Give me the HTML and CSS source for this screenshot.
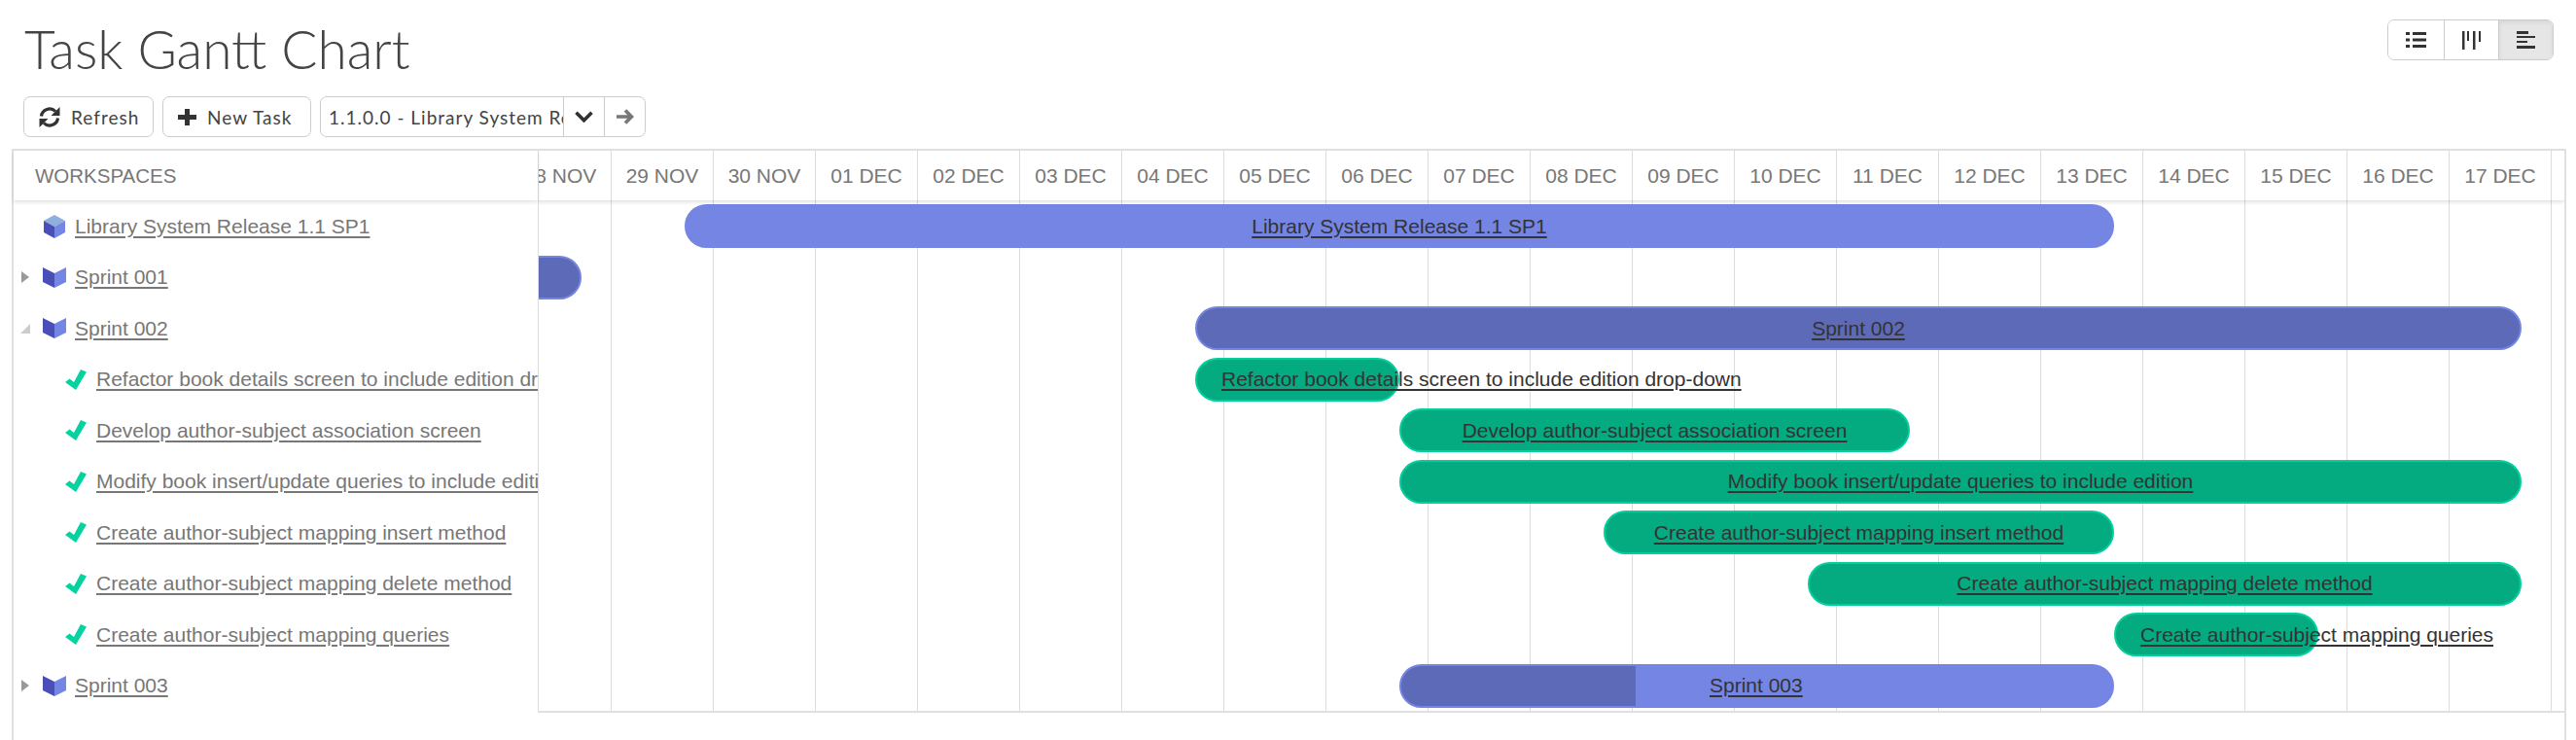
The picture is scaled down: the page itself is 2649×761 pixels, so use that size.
FILE: index.html
```html
<!DOCTYPE html>
<html lang="en">
<head>
<meta charset="utf-8">
<title>Task Gantt Chart</title>
<link rel="stylesheet" href="styles.css">
</head>
<body>
<header class="page-head">
  <h1 class="title">Task Gantt Chart</h1>
  <div class="views">
    <button class="view">
      <svg width="21" height="16" viewBox="0 0 21 16"><path fill="#333" d="M0 0h4v3H0zM7 0h14v3H7zM0 6.500h4v3H0zM7 6.500h14v3H7zM0 13h4v3H0zM7 13h14v3H7z"/></svg>
    </button>
    <button class="view">
      <svg width="19" height="19" viewBox="0 0 19 19"><path fill="#333" d="M0 0h2.500v19H0zM5 0h2v10H5zM11 0h2.500v19H11zM17 0h2v11h-2z"/></svg>
    </button>
    <button class="view view-on">
      <svg width="19" height="18" viewBox="0 0 19 18"><path fill="#333" d="M0 0h12v3H0zM0 5h19v2H0zM0 10h11v2H0zM0 15h19v3H0z"/></svg>
    </button>
  </div>
</header>

<div class="toolbar">
  <button class="btn btn-refresh">
    <svg width="22" height="21" viewBox="0 0 22 21"><g fill="none" stroke="#333" stroke-width="3.200"><path d="M2.500 9.500A8.500 8.500 0 0 1 17 4.500"/><path d="M19.500 11.500A8.500 8.500 0 0 1 5 16.500"/></g><path fill="#333" d="M21.500 0v9h-9zM.500 21v-9h9z"/></svg>
    <span>Refresh</span>
  </button>
  <button class="btn btn-new">
    <svg width="19" height="17" viewBox="0 0 19 17"><path fill="#333" d="M7 0h5v6h7v5h-7v6H7v-6H0V6h7z"/></svg>
    <span>New Task</span>
  </button>
  <div class="picker">
    <div class="picker-value">1.1.0.0 - Library System Release 1.1 SP1</div>
    <div class="picker-btn picker-caret">
      <svg width="19" height="12" viewBox="0 0 19 12"><path fill="none" stroke="#333" stroke-width="3.600" d="M1.500 1.800l8 8 8-8"/></svg>
    </div>
    <div class="picker-btn picker-go">
      <svg width="18" height="16" viewBox="0 0 18 16"><path fill="none" stroke="#777" stroke-width="3.600" d="M0 8h15M9 1.500L15.500 8 9 14.500"/></svg>
    </div>
  </div>
</div>

<main class="panel">
  <section class="tree">
    <div class="tree-head">WORKSPACES</div>
    <div class="tree-rows">
      <div class="row row-release">
        <svg class="ico-cube" width="22" height="24" viewBox="0 0 22 24"><path fill="#8fb0dc" d="M11 0l11 6-11 6L0 6z"/><path fill="#4a4fb8" d="M0 6l11 6v12L0 18z"/><path fill="#7585e3" d="M22 6l-11 6v12l11-6z"/></svg>
        <a class="link">Library System Release 1.1 SP1</a>
      </div>
      <div class="row row-sprint">
        <span class="arrow arrow-closed"></span>
        <svg class="ico-book" width="24" height="21" viewBox="0 0 24 21"><path fill="#4a4fb8" d="M0 0l12 6v15L0 15z"/><path fill="#7585e3" d="M24 0L12 6v15l12-6z"/></svg>
        <a class="link">Sprint 001</a>
      </div>
      <div class="row row-sprint">
        <span class="arrow arrow-open"></span>
        <svg class="ico-book" width="24" height="21" viewBox="0 0 24 21"><path fill="#4a4fb8" d="M0 0l12 6v15L0 15z"/><path fill="#7585e3" d="M24 0L12 6v15l12-6z"/></svg>
        <a class="link">Sprint 002</a>
      </div>
      <div class="row row-task">
        <svg class="ico-check" width="22" height="21" viewBox="0 0 22 21"><path fill="#04d3a0" d="M0 13l4.500-3.500L9 13 16 0l6 2.500L11 21z"/></svg>
        <a class="link">Refactor book details screen to include edition drop-down</a>
      </div>
      <div class="row row-task">
        <svg class="ico-check" width="22" height="21" viewBox="0 0 22 21"><path fill="#04d3a0" d="M0 13l4.500-3.500L9 13 16 0l6 2.500L11 21z"/></svg>
        <a class="link">Develop author-subject association screen</a>
      </div>
      <div class="row row-task">
        <svg class="ico-check" width="22" height="21" viewBox="0 0 22 21"><path fill="#04d3a0" d="M0 13l4.500-3.500L9 13 16 0l6 2.500L11 21z"/></svg>
        <a class="link">Modify book insert/update queries to include edition</a>
      </div>
      <div class="row row-task">
        <svg class="ico-check" width="22" height="21" viewBox="0 0 22 21"><path fill="#04d3a0" d="M0 13l4.500-3.500L9 13 16 0l6 2.500L11 21z"/></svg>
        <a class="link">Create author-subject mapping insert method</a>
      </div>
      <div class="row row-task">
        <svg class="ico-check" width="22" height="21" viewBox="0 0 22 21"><path fill="#04d3a0" d="M0 13l4.500-3.500L9 13 16 0l6 2.500L11 21z"/></svg>
        <a class="link">Create author-subject mapping delete method</a>
      </div>
      <div class="row row-task">
        <svg class="ico-check" width="22" height="21" viewBox="0 0 22 21"><path fill="#04d3a0" d="M0 13l4.500-3.500L9 13 16 0l6 2.500L11 21z"/></svg>
        <a class="link">Create author-subject mapping queries</a>
      </div>
      <div class="row row-sprint">
        <span class="arrow arrow-closed"></span>
        <svg class="ico-book" width="24" height="21" viewBox="0 0 24 21"><path fill="#4a4fb8" d="M0 0l12 6v15L0 15z"/><path fill="#7585e3" d="M24 0L12 6v15l12-6z"/></svg>
        <a class="link">Sprint 003</a>
      </div>
    </div>
  </section>

  <section class="chart">
    <div class="dates">
      <div class="date">28 NOV</div><div class="date">29 NOV</div><div class="date">30 NOV</div>
      <div class="date">01 DEC</div><div class="date">02 DEC</div><div class="date">03 DEC</div>
      <div class="date">04 DEC</div><div class="date">05 DEC</div><div class="date">06 DEC</div>
      <div class="date">07 DEC</div><div class="date">08 DEC</div><div class="date">09 DEC</div>
      <div class="date">10 DEC</div><div class="date">11 DEC</div><div class="date">12 DEC</div>
      <div class="date">13 DEC</div><div class="date">14 DEC</div><div class="date">15 DEC</div>
      <div class="date">16 DEC</div><div class="date">17 DEC</div>
    </div>
    <div class="tracks">
      <div class="track"><div class="bar bar-release" style="margin-left:180px;width:1470px"><a class="bar-label">Library System Release 1.1 SP1</a></div></div>
      <div class="track"><div class="bar bar-sprint" style="margin-left:-166px;width:240px"></div></div>
      <div class="track"><div class="bar bar-sprint" style="margin-left:705px;width:1364px"><a class="bar-label">Sprint 002</a></div></div>
      <div class="track"><div class="bar bar-task" style="margin-left:705px;width:210px"><a class="bar-label">Refactor book details screen to include edition drop-down</a></div></div>
      <div class="track"><div class="bar bar-task" style="margin-left:915px;width:525px"><a class="bar-label">Develop author-subject association screen</a></div></div>
      <div class="track"><div class="bar bar-task" style="margin-left:915px;width:1154px"><a class="bar-label">Modify book insert/update queries to include edition</a></div></div>
      <div class="track"><div class="bar bar-task" style="margin-left:1125px;width:525px"><a class="bar-label">Create author-subject mapping insert method</a></div></div>
      <div class="track"><div class="bar bar-task" style="margin-left:1335px;width:734px"><a class="bar-label">Create author-subject mapping delete method</a></div></div>
      <div class="track"><div class="bar bar-task" style="margin-left:1650px;width:210px"><a class="bar-label">Create author-subject mapping queries</a></div></div>
      <div class="track"><div class="bar bar-progress" style="margin-left:915px;width:735px;--done:33%"><a class="bar-label bar-label-short">Sprint 003</a></div></div>
    </div>
  </section>
</main>
</body>
</html>
```

FILE: styles.css
```css
* { box-sizing: border-box; }

html, body {
  margin: 0;
  height: 100%;
  overflow: hidden;
  background: #fff;
  font-family: "Liberation Sans", Arial, sans-serif;
  color: #777;
}

body {
  display: flex;
  flex-direction: column;
}

.page-head {
  display: flex;
  justify-content: space-between;
  align-items: flex-start;
  height: 99px;
  padding: 20px 23px 0 25px;
}

.title {
  margin: 0;
  font-family: "Lato", sans-serif;
  font-weight: 300;
  font-size: 55px;
  line-height: 60px;
  letter-spacing: 0;
  color: #444;
}

.views {
  display: flex;
  height: 42px;
  border: 1px solid #ccc;
  border-radius: 7px;
  overflow: hidden;
}

.view {
  display: flex;
  align-items: center;
  justify-content: center;
  width: 58px;
  padding: 0;
  background: #fff;
  border: 0;
  border-right: 1px solid #ccc;
}

.view:nth-child(2) { width: 56px; }

.view-on {
  width: 55px;
  background: #e6e6e6;
  box-shadow: inset 0 2px 4px rgba(0, 0, 0, .08);
  border-right: 0;
}

.toolbar {
  display: flex;
  gap: 9px;
  height: 54px;
  padding-left: 24px;
}

.btn,
.picker {
  display: flex;
  align-items: center;
  height: 42px;
  background: #fff;
  border: 1px solid #ccc;
  border-radius: 7px;
  font-family: "Lato", sans-serif;
  font-weight: 400;
  font-size: 19px;
  letter-spacing: 1px;
  color: #444;
}

.btn { padding: 0; gap: 11px; }
.btn-refresh { width: 134px; padding-left: 15px; }
.btn-new { width: 153px; padding-left: 15px; }

.picker { width: 335px; overflow: hidden; }

.picker-value {
  flex: none;
  width: 249px;
  padding-left: 8px;
  overflow: hidden;
  white-space: nowrap;
}

.picker-btn {
  display: flex;
  align-items: center;
  justify-content: center;
  height: 100%;
  border-left: 1px solid #ccc;
}

.picker-caret { width: 42px; }
.picker-go { width: 42px; }

.panel {
  flex: 1;
  display: flex;
  margin: 0 10px 0 12px;
  border: 2px solid #e0e0e0;
  border-bottom: 0;
  min-height: 0;
}

.tree {
  flex: none;
  width: 539px;
}

.tree-head {
  display: flex;
  align-items: center;
  height: 51px;
  padding-left: 22px;
  font-size: 20.500px;
  box-shadow: 0 2px 4px rgba(0, 0, 0, .12);
  position: relative;
}

.tree-rows {
  display: flex;
  flex-direction: column;
  gap: 7.500px;
  padding-top: 4px;
}

.row {
  display: flex;
  align-items: center;
  height: 45px;
  overflow: hidden;
  white-space: nowrap;
  font-size: 21px;
}

.row-release { padding-left: 31px; }
.row-sprint { padding-left: 8px; }
.row-task { padding-left: 53px; }

.link {
  text-decoration: underline;
  text-decoration-thickness: 2px;
  text-underline-offset: 3px;
  color: #777;
}

.ico-cube { flex: none; margin-right: 10px; }
.ico-book { flex: none; margin-right: 9px; }
.ico-check { flex: none; margin-right: 10px; }

.arrow {
  flex: none;
  width: 0;
  height: 0;
  margin-right: 14px;
}

.arrow-closed {
  border-style: solid;
  border-width: 6px 0 6px 8px;
  border-color: transparent transparent transparent #999;
  margin-right: 14px;
}

.arrow-open {
  border-style: solid;
  border-width: 0 0 10px 10px;
  border-color: transparent transparent #ccc transparent;
  margin-left: -1px;
  margin-right: 13px;
}

.chart {
  flex: 1;
  min-width: 0;
  overflow: hidden;
  border-left: 1px solid #ddd;
  align-self: flex-start;
  border-bottom: 2px solid #e0e0e0;
}

.dates {
  display: flex;
  height: 51px;
  margin-left: -30px;
  box-shadow: 0 2px 4px rgba(0, 0, 0, .12);
  position: relative;
}

.date {
  flex: none;
  width: 105px;
  display: flex;
  align-items: center;
  justify-content: center;
  border-right: 1px solid #ddd;
  font-size: 21px;
  white-space: nowrap;
}

.tracks {
  display: flex;
  flex-direction: column;
  gap: 7.500px;
  padding: 4px 0 3.500px;
  margin-left: -30px;
  background-image: linear-gradient(to left, #dcdcdc 1px, transparent 1px);
  background-size: 105px 100%;
}

.track {
  display: flex;
  height: 45px;
}

.bar {
  flex: none;
  display: flex;
  align-items: center;
  height: 45px;
  padding: 0 25px;
  border-radius: 22.500px;
  white-space: nowrap;
  font-size: 21px;
  border: 2px solid transparent;
}

.bar-release { background: #7585e3; border-color: #7585e3; }
.bar-sprint { background: #5d6ab8; border-color: #7585e3; }
.bar-task { background: #04aa80; border-color: #04cf9c; }

.bar-progress {
  background: linear-gradient(to right, #5d6ab8 var(--done), #7585e3 var(--done));
  border-color: #7585e3;
}

.bar-label {
  flex: none;
  margin: 0 auto;
  color: #333;
  text-decoration: underline;
  text-decoration-thickness: 2px;
  text-underline-offset: 3px;
}

.bar-label-short { margin: 0 0 0 292px; }
```
